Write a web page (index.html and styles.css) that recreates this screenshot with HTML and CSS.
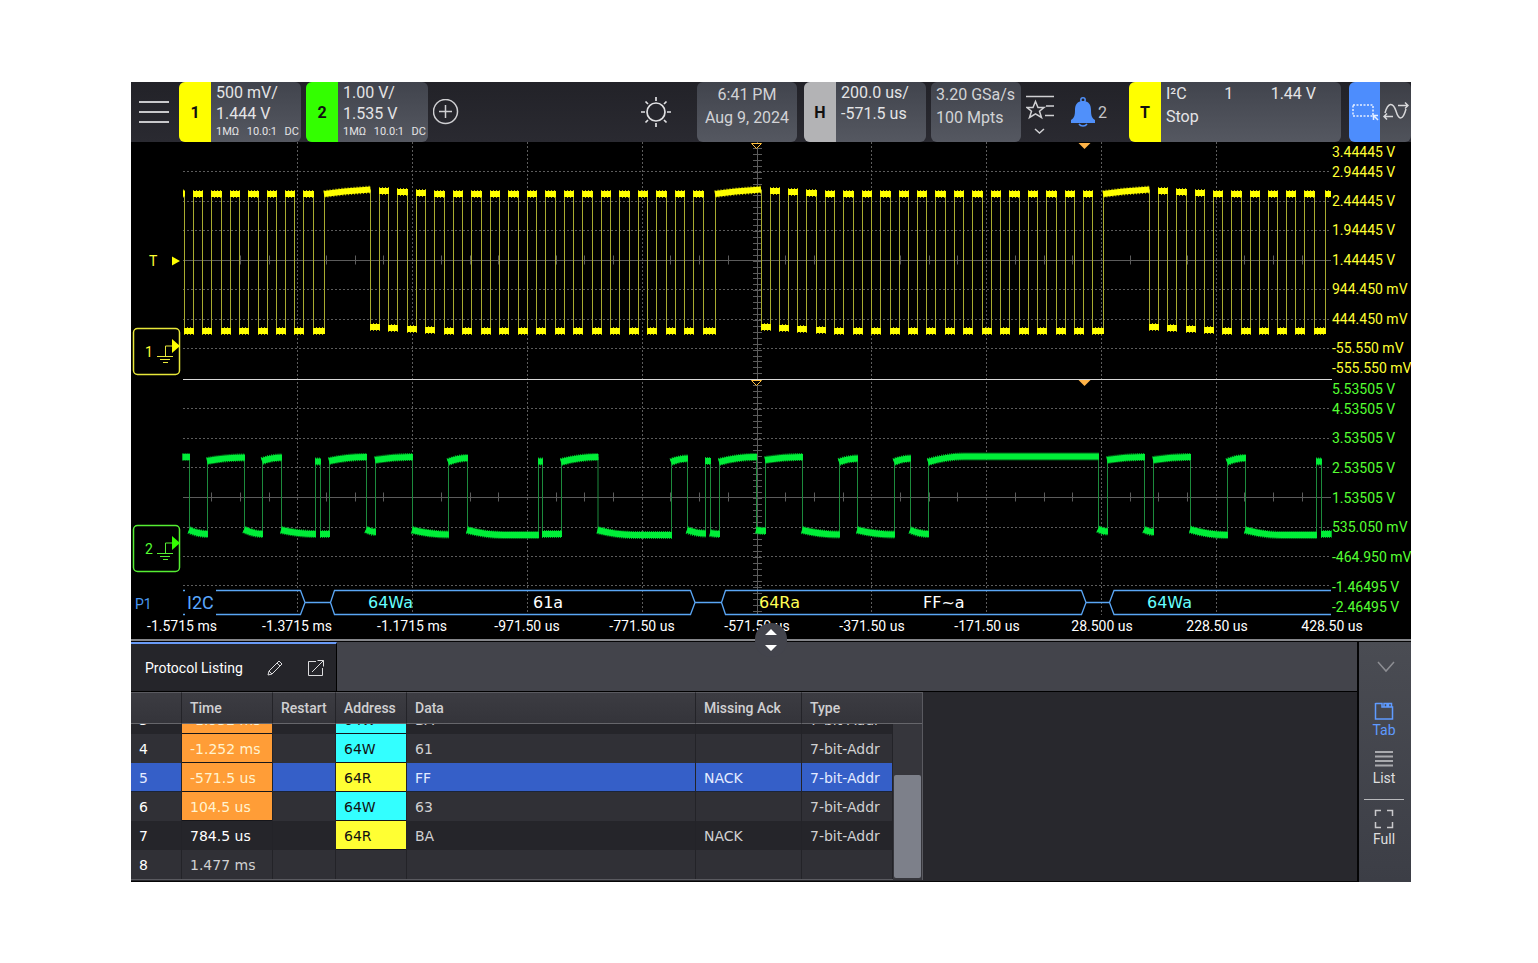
FILE: index.html
```html
<!DOCTYPE html>
<html lang="en">
<head>
<meta charset="utf-8">
<title>Oscilloscope</title>
<link rel="stylesheet" href="styles.css">
</head>
<body>
<main class="scope">
  <header class="topbar">
    <button class="icon-btn menu" aria-label="Menu">
      <svg width="30" height="24" viewBox="0 0 30 24"><path d="M0 2H30M0 12H30M0 22H30" stroke="#c8c8cb" stroke-width="2"/></svg>
    </button>
    <button class="card channel">
      <span class="badge yellow">1</span>
      <span class="lines"><span>500 mV/</span><span>1.444 V</span><span class="fine"><span>1MΩ</span><span>10.0:1</span><span>DC</span></span></span>
    </button>
    <button class="card channel">
      <span class="badge green">2</span>
      <span class="lines"><span>1.00 V/</span><span>1.535 V</span><span class="fine"><span>1MΩ</span><span>10.0:1</span><span>DC</span></span></span>
    </button>
    <button class="icon-btn add" aria-label="Add channel">
      <svg width="26" height="26" viewBox="0 0 26 26" fill="none" stroke="#cfcfd2" stroke-width="1.500"><circle cx="12.500" cy="12.500" r="12"/><path d="M12.500 6V19M6 12.500H19"/></svg>
    </button>
    <span class="spacer"></span>
    <button class="icon-btn sun" aria-label="Brightness">
      <svg width="30" height="30" viewBox="0 0 30 30" fill="none" stroke="#e0e0e2" stroke-width="1.700"><circle cx="15" cy="15" r="9"/><path d="M15 0V4M15 26V30M0 15H4M26 15H30M4.500 4.500L7 7M23 23L25.500 25.500M25.500 4.500L23 7M7 23L4.500 25.500"/></svg>
    </button>
    <button class="card clock"><span>6:41 PM</span><span>Aug 9, 2024</span></button>
    <button class="card channel">
      <span class="badge gray">H</span>
      <span class="lines"><span>200.0 us/</span><span>-571.5 us</span></span>
    </button>
    <button class="card rate"><span>3.20 GSa/s</span><span>100 Mpts</span></button>
    <button class="icon-btn star" aria-label="Favorites">
      <svg width="30" height="40" viewBox="0 0 30 40" fill="none" stroke="#d0d0d3" stroke-width="1.500"><path d="M0 2.500H28M20 12H28M19 21.500H28"/><path d="M9.500 7.500L12 13.500H18L13.500 17.200L15.500 23.500L9.500 19.800L3.500 23.500L5.500 17.200L1 13.500H7Z"/><path d="M9 35L13.500 39L18 35"/></svg>
    </button>
    <button class="icon-btn bell">
      <svg width="26" height="30" viewBox="0 0 26 30"><circle cx="13" cy="3" r="2.200" fill="none" stroke="#5090fa" stroke-width="1.500"/><path d="M13 4C19 4 21 8 21 13C21 19 22 21 25 23V26H1V23C4 21 5 19 5 13C5 8 7 4 13 4Z" fill="#5090fa"/><path d="M9 27A4.500 3.500 0 0 0 17 27" fill="none" stroke="#5090fa" stroke-width="1.500"/></svg>
      <span>2</span>
    </button>
    <button class="card trigger">
      <span class="badge yellow">T</span>
      <span class="lines wide"><span class="spread"><span>I²C</span><span>1</span><span>1.44 V</span></span><span>Stop</span></span>
    </button>
    <div class="modes">
      <button class="mode active" aria-label="Zone select">
        <svg width="28" height="20" viewBox="0 0 28 20" fill="none"><rect x="2" y="3" width="20" height="11" stroke="#e8f0ff" stroke-width="1.500" stroke-dasharray="2 1.500"/><path d="M27 18L23 14M22.500 18V13.500H27" stroke="#e8f0ff" stroke-width="1.500"/></svg>
      </button>
      <button class="mode" aria-label="Waveform">
        <svg width="27" height="22" viewBox="0 0 27 22" fill="none" stroke="#d8d8da" stroke-width="1.500"><path d="M3 12C6 1 11 1 14 10C17 20 21 19 24 8"/><path d="M16 4.500H26M23 1.500L26 4.500L23 7.500M11 15.500H2M5 12.500L2 15.500L5 18.500"/></svg>
      </button>
    </div>
  </header>

  <svg class="plot" viewBox="131 142 1280 497" role="img" aria-label="Waveforms">
    <g id="grid"></g>
    <path class="divider" d="M183 379.500H1332"/>
    <g id="traces"></g>

    <g class="pointer-open"><path d="M751.500 143.500H761.500L756.500 148.500Z"/><path d="M751.500 380.500H761.500L756.500 385.500Z"/></g>
    <g class="pointer"><path d="M1078.500 143H1090.500L1084.500 149Z"/><path d="M1078.500 380H1090.500L1084.500 386Z"/></g>

    <g class="ch1">
      <text x="149" y="266">T</text><path class="solid" d="M172 256.500L180 261L172 265.500Z"/>
      <rect class="frame" x="133.500" y="328.500" width="46" height="46" rx="4"/>
      <text x="145" y="357">1</text>
      <path class="ground" d="M165.500 356V346H173M157 356.500H173M160 359.500H170M163 362.500H168"/>
      <path class="solid" d="M172 339L180 346L172 353Z"/>
    </g>
    <g class="ch2">
      <rect class="frame" x="133.500" y="525.500" width="46" height="46" rx="4"/>
      <text x="145" y="554">2</text>
      <path class="ground" d="M165.500 553V543H173M157 553.500H173M160 556.500H170M163 559.500H168"/>
      <path class="solid" d="M172 536L180 543L172 550Z"/>
    </g>

    <g class="bus">
      <path d="M183 590.500H185M183 614.500H185M216 590.500H300.500L305 602.500L300.500 614.500H216M305 602.500H330.500M1331 590.500H1114L1109.500 602.500L1114 614.500H1331M695 602.500H721.500M1086 602.500H1109.500"/>
      <path d="M334.500 590.500H690.500L695 602.500L690.500 614.500H334.500L330.500 602.500ZM725.500 590.500H1081.500L1086 602.500L1081.500 614.500H725.500L721.500 602.500Z"/>
      <text class="bus-id" x="135" y="609">P1</text>
      <text class="bus-name" x="187" y="609">I2C</text>
      <text class="write" x="368" y="608">64Wa</text>
      <text class="data" x="533" y="608">61a</text>
      <text class="read" x="759" y="608">64Ra</text>
      <text class="data" x="923" y="608">FF~a</text>
      <text class="write" x="1147" y="608">64Wa</text>
    </g>

    <g class="ch1">
      <text x="1332" y="157">3.44445 V</text><text x="1332" y="177">2.94445 V</text><text x="1332" y="206">2.44445 V</text>
      <text x="1332" y="235">1.94445 V</text><text x="1332" y="265">1.44445 V</text><text x="1332" y="294">944.450 mV</text>
      <text x="1332" y="324">444.450 mV</text><text x="1332" y="353">-55.550 mV</text><text x="1332" y="373">-555.550 mV</text>
    </g>
    <g class="ch2">
      <text x="1332" y="394">5.53505 V</text><text x="1332" y="414">4.53505 V</text><text x="1332" y="443">3.53505 V</text>
      <text x="1332" y="473">2.53505 V</text><text x="1332" y="503">1.53505 V</text><text x="1332" y="532">535.050 mV</text>
      <text x="1332" y="562">-464.950 mV</text><text x="1332" y="592">-1.46495 V</text><text x="1332" y="612">-2.46495 V</text>
    </g>
    <g class="time">
      <text x="182" y="631">-1.5715 ms</text><text x="297" y="631">-1.3715 ms</text><text x="412" y="631">-1.1715 ms</text>
      <text x="527" y="631">-971.50 us</text><text x="642" y="631">-771.50 us</text><text x="757" y="631">-571.50 us</text>
      <text x="872" y="631">-371.50 us</text><text x="987" y="631">-171.50 us</text><text x="1102" y="631">28.500 us</text>
      <text x="1217" y="631">228.50 us</text><text x="1332" y="631">428.50 us</text>
    </g>
  </svg>

  <section class="panel">
    <button class="grip" aria-label="Resize panel">
      <svg width="12" height="22" viewBox="0 0 12 22" fill="#fff"><path d="M0 6L6 0L12 6ZM0 16L6 22L12 16Z"/></svg>
    </button>
    <div class="listing">
      <div class="tabs">
        <div class="tab">
          <span>Protocol Listing</span>
          <button class="tool" aria-label="Edit"><svg width="16" height="16" viewBox="0 0 16 16" fill="none" stroke="#dcdcde"><path d="M1 15L2 11L12 1L15 4L5 14ZM2 11L5 14M10 3L13 6"/></svg></button>
          <button class="tool" aria-label="Open in window"><svg width="18" height="18" viewBox="0 0 18 18" fill="none" stroke="#dcdcde"><path d="M9 2.500H1.500V16.500H15.500V9M5 13L16.500 1.500M10.500 1.500H16.500V7.500"/></svg></button>
        </div>
      </div>
      <div class="table-area">
        <div class="scroller" id="scroller">
          <table>
            <colgroup><col class="c-num"><col class="c-time"><col class="c-restart"><col class="c-addr"><col class="c-data"><col class="c-ack"><col class="c-type"></colgroup>
            <thead><tr><th></th><th>Time</th><th>Restart</th><th>Address</th><th>Data</th><th>Missing Ack</th><th>Type</th></tr></thead>
            <tbody>
              <tr class="dark"><td>3</td><td class="orange">-1.932 ms</td><td></td><td class="cyan">64W</td><td>BA</td><td></td><td>7-bit-Addr</td></tr>
              <tr><td>4</td><td class="orange">-1.252 ms</td><td></td><td class="cyan">64W</td><td>61</td><td></td><td>7-bit-Addr</td></tr>
              <tr class="selected"><td>5</td><td class="orange">-571.5 us</td><td></td><td class="lemon">64R</td><td>FF</td><td>NACK</td><td>7-bit-Addr</td></tr>
              <tr><td>6</td><td class="orange">104.5 us</td><td></td><td class="cyan">64W</td><td>63</td><td></td><td>7-bit-Addr</td></tr>
              <tr class="dark"><td>7</td><td class="bright">784.5 us</td><td></td><td class="lemon">64R</td><td>BA</td><td>NACK</td><td>7-bit-Addr</td></tr>
              <tr><td>8</td><td>1.477 ms</td><td></td><td></td><td></td><td></td><td></td></tr>
            </tbody>
          </table>
        </div>
        <div class="track"><div class="track-head"></div><div class="thumb"></div></div>
      </div>
    </div>
    <nav class="side">
      <button class="side-btn collapse" aria-label="Collapse"><svg width="18" height="12" viewBox="0 0 18 12" fill="none" stroke="#8d8e93" stroke-width="1.500"><path d="M1 1L9 10L17 1"/></svg></button>
      <button class="side-btn on"><svg width="20" height="18" viewBox="0 0 20 18" fill="none" stroke="#5f9bff" stroke-width="1.500"><path d="M1.500 1V17H18.500V5H8V1.500H1.500M10 5V1.500H13V5M14.500 5V1.500H17.500V5"/></svg>Tab</button>
      <button class="side-btn list"><svg width="20" height="18" viewBox="0 0 20 18" stroke="#a9aaae" stroke-width="2"><path d="M1 2H19M1 6.500H19M1 11H19M1 15.500H19"/></svg>List</button>
      <hr>
      <button class="side-btn"><svg width="20" height="20" viewBox="0 0 20 20" fill="none" stroke="#c9c9cc" stroke-width="1.500"><path d="M1.500 7V1.500H7M13 1.500H18.500V7M18.500 13V18.500H13M7 18.500H1.500V13"/></svg>Full</button>
    </nav>
  </section>
</main>
<script src="plot.js"></script>
</body>
</html>
```

FILE: styles.css
```css
* { box-sizing: border-box; }
body {
  margin: 0;
  padding: 82px 127px 81px 131px;
  background: #fff;
  font-family: Roboto, "Liberation Sans", sans-serif;
  font-size: 16px;
  color: #e4e4e6;
}
button {
  margin: 0;
  padding: 0;
  border: 0;
  background: none;
  color: inherit;
  font: inherit;
  text-align: left;
}
svg { display: block; flex: none; }
.scope { background: #000; }

.topbar {
  display: flex;
  height: 60px;
  background: linear-gradient(#222228, #2a2a31);
}
.icon-btn { display: flex; align-items: center; justify-content: center; }
.menu { width: 48px; padding-right: 2px; }
.card {
  display: flex;
  border-radius: 6px;
  overflow: hidden;
  background: linear-gradient(#41444d, #555861);
  white-space: nowrap;
}
.channel { width: 122px; margin-right: 5px; }
.badge {
  width: 32px;
  flex: none;
  display: flex;
  align-items: center;
  justify-content: center;
  color: #111;
  font-weight: 700;
}
.yellow { background: #ffff00; }
.green { background: #33ff00; }
.gray { background: #b3b3b5; }
.lines {
  display: flex;
  flex-direction: column;
  align-self: flex-start;
  padding-left: 5px;
  line-height: 21px;
  flex: 1;
}
.fine {
  display: flex;
  justify-content: space-between;
  padding-right: 2px;
  font-size: 11px;
  line-height: 16px;
}
.spacer { flex: 1; }
.add { width: 26px; }
.sun { width: 30px; margin-right: 26px; }
.clock, .rate {
  flex-direction: column;
  padding-top: 1px;
  line-height: 23px;
  color: #d2d3d6;
}
.clock { width: 100px; align-items: center; margin-right: 7px; }
.rate { width: 90px; padding-left: 5px; }
.star { width: 40px; padding-top: 4px; }
.bell { width: 50px; padding-left: 5px; gap: 2px; margin-right: 18px; color: #c4c4c8; }
.trigger { width: 212px; }
.wide { line-height: 23px; }
.spread { display: flex; justify-content: space-between; padding-right: 25px; }
.modes {
  display: flex;
  width: 62px;
  margin-left: 8px;
  border-radius: 6px;
  overflow: hidden;
  background: linear-gradient(#3c3e46, #50535b);
}
.mode { flex: 1; display: flex; align-items: center; justify-content: center; }
.active { background: #4d8dfd; }

.plot { width: 100%; height: auto; font-size: 14px; }
.grid-dash { stroke: #5c5c5c; stroke-dasharray: 2 2; fill: none; }
.grid-axis { stroke: #5c5c5c; fill: none; }
.divider { stroke: #d8d8d8; }
.edge1 { stroke: #a8aa30; fill: none; }
.rail1 { stroke: #ffff00; stroke-width: 6; fill: none; }
.fuzz1 { stroke: #b0b000; stroke-width: 8; stroke-dasharray: 1 2; fill: none; }
.edge2 { stroke: #1c8a3c; fill: none; }
.rail2 { stroke: #00ee38; stroke-width: 6; fill: none; }
.fuzz2 { stroke: #00b82c; stroke-width: 8; stroke-dasharray: 1 1; fill: none; }
.pointer-open path { fill: #000; stroke: #ffc040; }
.pointer path { fill: #ffb347; }
.ch1 { fill: #ffff33; }
.ch2 { fill: #55ff33; }
.ch1 .solid { fill: #ffff00; }
.ch2 .solid { fill: #33ff00; }
.frame, .ground { fill: none; stroke-width: 1.500; }
.ch1 .frame, .ch1 .ground { stroke: #e8e83a; }
.ch2 .frame, .ch2 .ground { stroke: #55ee33; }
.ground { stroke-width: 1; }
.bus path { fill: none; stroke: #5aa6f5; stroke-width: 1.300; }
.bus text { font-family: "DejaVu Sans", sans-serif; font-size: 16px; }
.bus .bus-id { fill: #4a98f0; font-family: Roboto, sans-serif; font-size: 14px; }
.bus .bus-name { fill: #5aa8ff; font-family: Roboto, sans-serif; font-size: 18px; }
.bus .write { fill: #66ffff; }
.bus .read { fill: #ffff55; }
.bus .data { fill: #fff; }
.time { fill: #fff; text-anchor: middle; }

.panel {
  position: relative;
  display: flex;
  height: 243px;
  border-top: 2px solid #85868a;
  background: #050506;
  padding-top: 1px;
  color: #d0d0d2;
}
.grip {
  position: absolute;
  top: -18px;
  left: 50%;
  width: 32px;
  height: 34px;
  margin-left: -16px;
  border-radius: 16px;
  background: #43444c;
  display: flex;
  align-items: center;
  justify-content: center;
}
.listing { flex: 1; min-width: 0; display: flex; flex-direction: column; background: #28282d; margin-bottom: 1px; }
.tabs { display: flex; height: 50px; background: #43444b; border-bottom: 1px solid #000; }
.tab {
  display: flex;
  align-items: center;
  justify-content: space-between;
  width: 206px;
  padding: 0 11px 0 14px;
  border-top: 2px solid #6a9bf7;
  border-right: 1px solid #000;
  background: #25252a;
  color: #fff;
  font-size: 14px;
  white-space: nowrap;
}
.table-area { display: flex; height: 188px; }
.scroller { width: 762px; overflow: auto; scrollbar-width: none; border-bottom: 1px solid #5a5a60; }
table { width: 762px; table-layout: fixed; border-collapse: separate; border-spacing: 0; }
.c-num { width: 51px; }
.c-time { width: 91px; }
.c-restart { width: 63px; }
.c-addr { width: 71px; }
.c-data { width: 289px; }
.c-ack { width: 106px; }
.c-type { width: 91px; }
th {
  position: sticky;
  top: 0;
  height: 32px;
  padding: 0 8px;
  background: linear-gradient(#3c3c42, #34343a);
  border-top: 1px solid #5a5a60;
  border-bottom: 1px solid #66666b;
  border-right: 1px solid #232328;
  font-size: 14px;
  font-weight: 500;
  text-align: left;
  white-space: nowrap;
}
th:last-child { border-right: 0; }
td {
  height: 29px;
  padding: 0 8px;
  background: #303036;
  border-right: 1px solid #232328;
  font-family: "DejaVu Sans", sans-serif;
  font-size: 14px;
  line-height: 20px;
  white-space: nowrap;
}
td:first-child { color: #fff; }
.dark td { background: #25252a; }
.selected td { background: #355fc8; color: #e4ebff; box-shadow: inset 0 -1px #1a2438; }
tr td.orange, tr td.cyan, tr td.lemon { box-shadow: inset 0 -1px #15151a; }
tr td.orange { background: #ff9d37; color: #fff3d0; }
tr td.cyan { background: #33ffff; color: #111; }
tr td.lemon { background: #ffff33; color: #111; }
.bright { color: #fff; }
.track { width: 30px; display: flex; flex-direction: column; background: #36363c; border-right: 1px solid #5a5a60; }
.track-head { height: 32px; background: linear-gradient(#3c3c42, #34343a); border-top: 1px solid #5a5a60; border-bottom: 1px solid #66666b; }
.thumb { height: 103px; margin: auto 1px 2px 1px; border-radius: 2px; background: #7d808a; }

.side {
  width: 52px;
  margin-left: 2px;
  padding-right: 2px;
  display: flex;
  flex-direction: column;
  align-items: center;
  background: linear-gradient(#4a4c53, #3c3e46);
}
.side-btn { display: flex; flex-direction: column; align-items: center; font-size: 14px; line-height: 21px; color: #dededf; }
.collapse { padding: 19px 0 29px 4px; }
.on { color: #5f9bff; margin-bottom: 9px; }
.list { margin-bottom: 10px; }
.side hr { width: 40px; height: 1px; margin: 0 0 9px; border: 0; background: #b8b9bc; }
```

FILE: plot.js
```js
const NS = "http://www.w3.org/2000/svg";
const grid = document.getElementById("grid");
const traces = document.getElementById("traces");

function path(parent, cls, d) {
  const p = document.createElementNS(NS, "path");
  p.setAttribute("class", cls);
  p.setAttribute("d", d);
  parent.appendChild(p);
}

// Graticule: dotted division lines, solid centre axes with minor ticks.
let dashes = "", axes = "";
for (let i = 1; i < 10; i++) {
  if (i !== 5) dashes += `M${Math.floor(183 + i * 114.8) + 0.5} 142V615`;
}
[171, 201, 230, 289, 319, 348, 408, 438, 467, 527, 556, 585].forEach(y => {
  dashes += `M183 ${y + 0.5}H1331`;
});
[260.5, 497.5].forEach(y => {
  axes += `M183 ${y}H1331`;
  for (let i = 1; i < 40; i++) {
    if (i % 4) axes += `M${Math.floor(183 + i * 28.7) + 0.5} ${y - 5}V${y + 4}`;
  }
});
axes += "M757.5 142V615";
for (let y = 148; y < 615; y += 5.93) {
  axes += `M753 ${Math.round(y) + 0.5}H762`;
}
path(grid, "grid-dash", dashes);
path(grid, "grid-axis", axes);

// Channel 1: clock bursts, each [first low, low pitch, low count, burst end].
const bursts = [
  [184.5, 18.4, 8, 324.5, false],
  [370.5, 18.48, 19, 715.5, true],
  [761, 18.44, 19, 1103.5, true],
  [1149.5, 18.3, 10, 1325.5, true]
];
let rail = "M183 193.5H185", edge = "";
bursts.forEach(([start, pitch, count, end, settling], b) => {
  for (let i = 0; i < count; i++) {
    const x0 = Math.floor(start + i * pitch) + 0.5;
    const last = i === count - 1;
    const x1 = last ? end : x0 + 9;
    const lift = settling ? Math.max(0, 4 - i) : 0;
    const low = 331 - lift;
    const high = 194 - Math.max(0, lift - 1);
    const before = i === 0 && settling ? 189.5 : high;
    edge += `M${x0} ${before}V${low}M${x1} ${low}V${high}`;
    rail += `M${x0 - 0.5} ${low}H${x1 + 0.5}`;
    if (!last) rail += `M${x1 - 0.5} ${high}H${Math.floor(start + (i + 1) * pitch) + 1}`;
  }
  if (b < 3) rail += `M${end - 0.5} 194L${end + 20} 191.5L${bursts[b + 1][0]} 189.5`;
  else rail += "M1325 194H1331";
});
path(traces, "edge1", edge);
path(traces, "fuzz1", rail);
path(traces, "rail1", rail);

// Channel 2: alternating high and low spans, each [end x, start y, end y].
const spans = [
  [189.5, 457, 457], [207.5, 530, 534], [244.5, 461, 457.5], [262.5, 529.5, 534],
  [281.5, 461, 457.5], [315.5, 530, 534], [320.5, 461.5, 461.5], [329.5, 534, 534],
  [366.5, 461, 457], [375.5, 529.5, 532], [412.5, 460, 457], [448.5, 530, 534.5],
  [467.5, 462, 458], [538.5, 530, 535], [542.5, 461.5, 461.5], [561.5, 534, 534],
  [598, 462, 457], [671.5, 530, 535], [687.5, 462, 458.5], [705.5, 530, 533.5],
  [710.5, 461, 461], [719.5, 533, 534], [756.5, 462, 457], [765.5, 530, 531],
  [802.5, 460, 457], [839.5, 530, 534.5], [857.5, 462, 458.5], [894.5, 530, 534.5],
  [910.5, 462, 458.5], [928.5, 530, 534], [1098.5, 462, 456.5], [1107.5, 529, 531.5],
  [1144.5, 460, 457], [1153.5, 529.5, 532], [1190.5, 460, 457], [1227.5, 529.5, 535],
  [1245.5, 462, 458], [1316.5, 530, 535], [1321.5, 461.5, 461.5], [1331, 534, 534]
];
let x = 183;
rail = "";
edge = "";
spans.forEach(([end, y0, y1], i) => {
  const bend = Math.min(end - x, 36);
  rail += `M${x - 0.5} ${y0}Q${x + bend / 2} ${y1} ${x + bend} ${y1}H${end + 0.5}`;
  const next = spans[i + 1];
  if (next) edge += `M${end} ${y1}V${next[1]}`;
  x = end;
});
path(traces, "edge2", edge);
path(traces, "fuzz2", rail);
path(traces, "rail2", rail);

// Open the listing scrolled to its last rows.
const scroller = document.getElementById("scroller");
scroller.scrollTop = scroller.scrollHeight;
```
